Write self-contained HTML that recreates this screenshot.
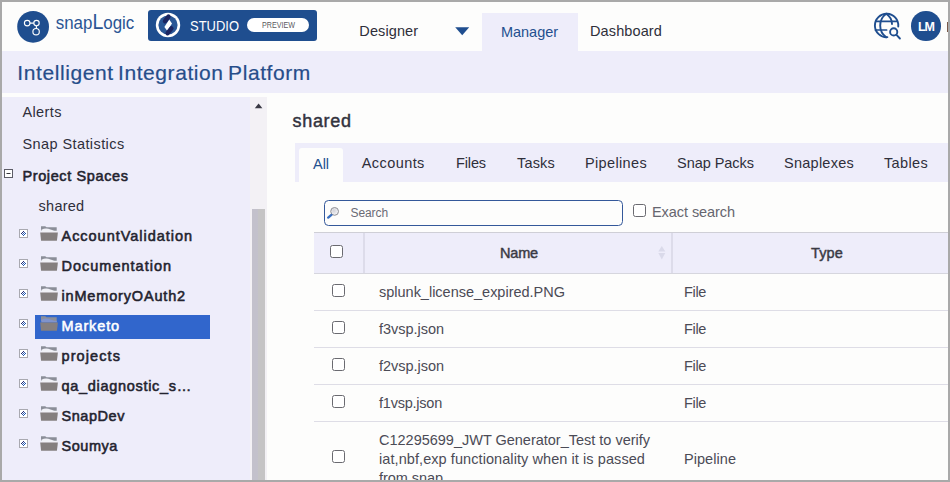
<!DOCTYPE html>
<html><head><meta charset="utf-8"><title>SnapLogic Manager</title>
<style>
html,body{margin:0;padding:0}
body{width:950px;height:482px;overflow:hidden;background:#a9a9a9;font-family:"Liberation Sans", sans-serif;position:relative}
#page{position:absolute;left:2px;top:2px;width:946px;height:478px;background:#fdfdfc}
#wrap{position:absolute;left:0;top:0;width:950px;height:482px;overflow:hidden}
.b{position:absolute}
.t{position:absolute;white-space:nowrap;line-height:20px}
svg{position:absolute;left:0;top:0}
#frame{position:absolute;left:0;top:0;width:946px;height:478px;border:2px solid #a9a9a9;pointer-events:none}
</style></head><body>
<div id="page"></div>
<div id="wrap">
<div class="b" style="left:2px;top:51px;width:946px;height:42px;background:#eeedfa;"></div>
<div class="b" style="left:482px;top:13px;width:96px;height:38px;background:#eeedfa;"></div>
<div class="b" style="left:148px;top:10px;width:169px;height:31px;background:#1f4e8f;border-radius:3px"></div>
<div class="b" style="left:247px;top:18px;width:62px;height:14px;background:#ffffff;border-radius:7px"></div>
<div class="b" style="left:911px;top:11.3px;width:29.5px;height:29.5px;background:#1f4e8f;border-radius:50%"></div>
<div class="b" style="left:946.5px;top:22px;width:1.5px;height:9.5px;background:#7a5a4a;"></div>
<div class="b" style="left:2px;top:97px;width:248px;height:383px;background:#eeedfa;"></div>
<div class="b" style="left:250px;top:97px;width:17px;height:383px;background:#f3f1f5;"></div>
<div class="b" style="left:252px;top:209px;width:13px;height:271px;background:linear-gradient(90deg,#c3c1cb 0,#c3c1cb 42%,#c5c4c5 46%,#c5c4c5 100%);"></div>
<div class="b" style="left:35px;top:315px;width:175px;height:24px;background:#3166cc;"></div>
<div class="b" style="left:295px;top:143px;width:653px;height:39px;background:#eeedfa;"></div>
<div class="b" style="left:299px;top:148px;width:44px;height:34px;background:#fdfdfc;border-radius:3px 3px 0 0"></div>
<div class="b" style="left:324px;top:200px;width:299px;height:26px;background:#fdfdfc;box-sizing:border-box;border:1px solid #34589a;border-radius:4.5px"></div>
<div class="b" style="left:314px;top:232px;width:634px;height:42px;background:#eeedfa;box-sizing:border-box;border-top:1px solid #cfcfd6;border-bottom:1px solid #d6d6de"></div>
<div class="b" style="left:363px;top:233px;width:2px;height:40px;background:#dddcea;"></div>
<div class="b" style="left:671px;top:233px;width:2px;height:40px;background:#dddcea;"></div>
<div class="b" style="left:314px;top:310px;width:634px;height:1px;background:#dedde6;"></div>
<div class="b" style="left:314px;top:347px;width:634px;height:1px;background:#dedde6;"></div>
<div class="b" style="left:314px;top:384px;width:634px;height:1px;background:#dedde6;"></div>
<div class="b" style="left:314px;top:421px;width:634px;height:1px;background:#dedde6;"></div>
<div class="b" style="left:330px;top:245px;width:13px;height:13px;background:#ffffff;box-sizing:border-box;border:1px solid #6a6a70;border-radius:2.5px"></div>
<div class="b" style="left:332px;top:284px;width:13px;height:13px;background:#ffffff;box-sizing:border-box;border:1px solid #6a6a70;border-radius:2.5px"></div>
<div class="b" style="left:332px;top:321px;width:13px;height:13px;background:#ffffff;box-sizing:border-box;border:1px solid #6a6a70;border-radius:2.5px"></div>
<div class="b" style="left:332px;top:358px;width:13px;height:13px;background:#ffffff;box-sizing:border-box;border:1px solid #6a6a70;border-radius:2.5px"></div>
<div class="b" style="left:332px;top:395px;width:13px;height:13px;background:#ffffff;box-sizing:border-box;border:1px solid #6a6a70;border-radius:2.5px"></div>
<div class="b" style="left:332px;top:450px;width:13px;height:13px;background:#ffffff;box-sizing:border-box;border:1px solid #6a6a70;border-radius:2.5px"></div>
<div class="b" style="left:633px;top:204px;width:13px;height:13px;background:#ffffff;box-sizing:border-box;border:1px solid #6a6a70;border-radius:2.5px"></div>
<svg width="950" height="482" viewBox="0 0 950 482">
<!-- snaplogic logo -->
<circle cx="33.1" cy="26.85" r="15.9" fill="#1f4e8f"/>
<g fill="none" stroke="#ffffff" stroke-width="1.15">
<circle cx="27.2" cy="23.1" r="2.8"/>
<circle cx="36.5" cy="23.1" r="2.7"/>
<circle cx="36.1" cy="31.7" r="3.2"/>
<path d="M30 23.1H33.8M36.4 25.8V28.5"/>
</g>
<text id="logotext" x="55.7" y="29.2" font-family="Liberation Sans, sans-serif" font-size="18.7" fill="#2a5594" textLength="78.6" lengthAdjust="spacingAndGlyphs">snap<tspan font-size="21.6">L</tspan>ogic</text>
<!-- studio icon -->
<circle cx="168" cy="25" r="12.2" fill="#ffffff"/>
<circle cx="168" cy="25" r="9.6" fill="#2a5796"/>
<path d="M169.2 19.4L172 23.4L167.4 31L164.4 27Z" fill="#ffffff"/>
<path d="M165 21.2L168.5 16.6" stroke="#1c2560" stroke-width="4.4" stroke-linecap="round"/>
<path d="M167.6 33.2L171.4 28.4" stroke="#1c2560" stroke-width="4.4" stroke-linecap="round"/>
<!-- nav dropdown triangle -->
<path d="M455.2 27.2H469.2L462.2 35.2Z" fill="#1f4e8f"/>
<!-- globe -->
<g fill="none" stroke="#1f4e8f" stroke-width="1.9" stroke-linecap="round">
<path d="M898.26 26.5A11.7 11.7 0 1 0 887.4 37.17"/>
<path d="M886.2 13.8C878.2 19.5 878.2 31.5 886.2 37.2"/>
<path d="M886.2 13.8C890 16.4 891.9 19.6 892 24"/>
<path d="M876 21.4H897.2M875.4 30H886.6" stroke-width="1.7"/>
<circle cx="893.7" cy="31.9" r="3.6"/>
<path d="M896.5 34.9L899.9 38.5"/>
</g>
<!-- scrollbar arrow -->
<path d="M254.8 108.2H262.4L258.6 103.6Z" fill="#3a3a44"/>
<!-- minus box -->
<rect x="4.5" y="169.5" width="8" height="8" fill="#ffffff" stroke="#5c5c66" stroke-width="1"/>
<path d="M6.5 173.5H10.5" stroke="#33333a" stroke-width="1"/>
<!-- search magnifier -->
<defs><radialGradient id="lens" cx="0.4" cy="0.4" r="0.7"><stop offset="0" stop-color="#d2d2d8"/><stop offset="1" stop-color="#fbfbfd"/></radialGradient></defs><circle cx="334.6" cy="211.4" r="3.9" fill="url(#lens)" stroke="#8d8d93" stroke-width="1"/>
<path d="M331.4 214.9L328.2 217.6" stroke="#3a6fc0" stroke-width="2.4" stroke-linecap="round"/>
<!-- sort icon -->
<path d="M658.3 251.6H665.3L661.8 245.9Z" fill="#dadaea"/>
<path d="M658.3 252.9H665.3L661.8 259.4Z" fill="#dadaea"/>
<rect x="19.5" y="229.5" width="8" height="8" fill="#ffffff" stroke="#a9a9b0" stroke-width="1"/>
<rect x="23" y="231" width="1" height="1" fill="#1c2470"/><rect x="22" y="232" width="1" height="1" fill="#1c2470"/><rect x="24" y="232" width="1" height="1" fill="#2458b0"/><rect x="21" y="233" width="1" height="1" fill="#1c2470"/><rect x="23" y="233" width="1" height="1" fill="#2458b0"/><rect x="25" y="233" width="1" height="1" fill="#2458b0"/><rect x="22" y="234" width="1" height="1" fill="#2458b0"/><rect x="24" y="234" width="1" height="1" fill="#2458b0"/><rect x="23" y="235" width="1" height="1" fill="#2458b0"/>
<path d="M41 226.2H45.2L46.6 227.3H56.7V231H41Z" fill="#8b8e98"/>
<path d="M41.4 229.7C44.5 228.3 47.5 228.3 50.5 229.5S55 230.9 56.9 230.7V232.6H41.2Z" fill="#f1f1f7"/>
<path d="M40.2 232.5H57.9L56.9 240.7H41.1Z" fill="#857f7f"/>
<rect x="19.5" y="259.5" width="8" height="8" fill="#ffffff" stroke="#a9a9b0" stroke-width="1"/>
<rect x="23" y="261" width="1" height="1" fill="#1c2470"/><rect x="22" y="262" width="1" height="1" fill="#1c2470"/><rect x="24" y="262" width="1" height="1" fill="#2458b0"/><rect x="21" y="263" width="1" height="1" fill="#1c2470"/><rect x="23" y="263" width="1" height="1" fill="#2458b0"/><rect x="25" y="263" width="1" height="1" fill="#2458b0"/><rect x="22" y="264" width="1" height="1" fill="#2458b0"/><rect x="24" y="264" width="1" height="1" fill="#2458b0"/><rect x="23" y="265" width="1" height="1" fill="#2458b0"/>
<path d="M41 256.2H45.2L46.6 257.3H56.7V261H41Z" fill="#8b8e98"/>
<path d="M41.4 259.7C44.5 258.3 47.5 258.3 50.5 259.5S55 260.9 56.9 260.7V262.6H41.2Z" fill="#f1f1f7"/>
<path d="M40.2 262.5H57.9L56.9 270.7H41.1Z" fill="#857f7f"/>
<rect x="19.5" y="289.5" width="8" height="8" fill="#ffffff" stroke="#a9a9b0" stroke-width="1"/>
<rect x="23" y="291" width="1" height="1" fill="#1c2470"/><rect x="22" y="292" width="1" height="1" fill="#1c2470"/><rect x="24" y="292" width="1" height="1" fill="#2458b0"/><rect x="21" y="293" width="1" height="1" fill="#1c2470"/><rect x="23" y="293" width="1" height="1" fill="#2458b0"/><rect x="25" y="293" width="1" height="1" fill="#2458b0"/><rect x="22" y="294" width="1" height="1" fill="#2458b0"/><rect x="24" y="294" width="1" height="1" fill="#2458b0"/><rect x="23" y="295" width="1" height="1" fill="#2458b0"/>
<path d="M41 286.2H45.2L46.6 287.3H56.7V291H41Z" fill="#8b8e98"/>
<path d="M41.4 289.7C44.5 288.3 47.5 288.3 50.5 289.5S55 290.9 56.9 290.7V292.6H41.2Z" fill="#f1f1f7"/>
<path d="M40.2 292.5H57.9L56.9 300.7H41.1Z" fill="#857f7f"/>
<rect x="19.5" y="319.5" width="8" height="8" fill="#ffffff" stroke="#a9a9b0" stroke-width="1"/>
<rect x="23" y="321" width="1" height="1" fill="#1c2470"/><rect x="22" y="322" width="1" height="1" fill="#1c2470"/><rect x="24" y="322" width="1" height="1" fill="#2458b0"/><rect x="21" y="323" width="1" height="1" fill="#1c2470"/><rect x="23" y="323" width="1" height="1" fill="#2458b0"/><rect x="25" y="323" width="1" height="1" fill="#2458b0"/><rect x="22" y="324" width="1" height="1" fill="#2458b0"/><rect x="24" y="324" width="1" height="1" fill="#2458b0"/><rect x="23" y="325" width="1" height="1" fill="#2458b0"/>
<path d="M41 316.2H45.2L46.6 317.3H56.7V321H41Z" fill="#8b8e98"/>
<path d="M41.4 319.7C44.5 318.3 47.5 318.3 50.5 319.5S55 320.9 56.9 320.7V322.6H41.2Z" fill="#7f93cc"/>
<path d="M40.2 322.5H57.9L56.9 330.7H41.1Z" fill="#857f7f"/>
<rect x="19.5" y="349.5" width="8" height="8" fill="#ffffff" stroke="#a9a9b0" stroke-width="1"/>
<rect x="23" y="351" width="1" height="1" fill="#1c2470"/><rect x="22" y="352" width="1" height="1" fill="#1c2470"/><rect x="24" y="352" width="1" height="1" fill="#2458b0"/><rect x="21" y="353" width="1" height="1" fill="#1c2470"/><rect x="23" y="353" width="1" height="1" fill="#2458b0"/><rect x="25" y="353" width="1" height="1" fill="#2458b0"/><rect x="22" y="354" width="1" height="1" fill="#2458b0"/><rect x="24" y="354" width="1" height="1" fill="#2458b0"/><rect x="23" y="355" width="1" height="1" fill="#2458b0"/>
<path d="M41 346.2H45.2L46.6 347.3H56.7V351H41Z" fill="#8b8e98"/>
<path d="M41.4 349.7C44.5 348.3 47.5 348.3 50.5 349.5S55 350.9 56.9 350.7V352.6H41.2Z" fill="#f1f1f7"/>
<path d="M40.2 352.5H57.9L56.9 360.7H41.1Z" fill="#857f7f"/>
<rect x="19.5" y="379.5" width="8" height="8" fill="#ffffff" stroke="#a9a9b0" stroke-width="1"/>
<rect x="23" y="381" width="1" height="1" fill="#1c2470"/><rect x="22" y="382" width="1" height="1" fill="#1c2470"/><rect x="24" y="382" width="1" height="1" fill="#2458b0"/><rect x="21" y="383" width="1" height="1" fill="#1c2470"/><rect x="23" y="383" width="1" height="1" fill="#2458b0"/><rect x="25" y="383" width="1" height="1" fill="#2458b0"/><rect x="22" y="384" width="1" height="1" fill="#2458b0"/><rect x="24" y="384" width="1" height="1" fill="#2458b0"/><rect x="23" y="385" width="1" height="1" fill="#2458b0"/>
<path d="M41 376.2H45.2L46.6 377.3H56.7V381H41Z" fill="#8b8e98"/>
<path d="M41.4 379.7C44.5 378.3 47.5 378.3 50.5 379.5S55 380.9 56.9 380.7V382.6H41.2Z" fill="#f1f1f7"/>
<path d="M40.2 382.5H57.9L56.9 390.7H41.1Z" fill="#857f7f"/>
<rect x="19.5" y="409.5" width="8" height="8" fill="#ffffff" stroke="#a9a9b0" stroke-width="1"/>
<rect x="23" y="411" width="1" height="1" fill="#1c2470"/><rect x="22" y="412" width="1" height="1" fill="#1c2470"/><rect x="24" y="412" width="1" height="1" fill="#2458b0"/><rect x="21" y="413" width="1" height="1" fill="#1c2470"/><rect x="23" y="413" width="1" height="1" fill="#2458b0"/><rect x="25" y="413" width="1" height="1" fill="#2458b0"/><rect x="22" y="414" width="1" height="1" fill="#2458b0"/><rect x="24" y="414" width="1" height="1" fill="#2458b0"/><rect x="23" y="415" width="1" height="1" fill="#2458b0"/>
<path d="M41 406.2H45.2L46.6 407.3H56.7V411H41Z" fill="#8b8e98"/>
<path d="M41.4 409.7C44.5 408.3 47.5 408.3 50.5 409.5S55 410.9 56.9 410.7V412.6H41.2Z" fill="#f1f1f7"/>
<path d="M40.2 412.5H57.9L56.9 420.7H41.1Z" fill="#857f7f"/>
<rect x="19.5" y="439.5" width="8" height="8" fill="#ffffff" stroke="#a9a9b0" stroke-width="1"/>
<rect x="23" y="441" width="1" height="1" fill="#1c2470"/><rect x="22" y="442" width="1" height="1" fill="#1c2470"/><rect x="24" y="442" width="1" height="1" fill="#2458b0"/><rect x="21" y="443" width="1" height="1" fill="#1c2470"/><rect x="23" y="443" width="1" height="1" fill="#2458b0"/><rect x="25" y="443" width="1" height="1" fill="#2458b0"/><rect x="22" y="444" width="1" height="1" fill="#2458b0"/><rect x="24" y="444" width="1" height="1" fill="#2458b0"/><rect x="23" y="445" width="1" height="1" fill="#2458b0"/>
<path d="M41 436.2H45.2L46.6 437.3H56.7V441H41Z" fill="#8b8e98"/>
<path d="M41.4 439.7C44.5 438.3 47.5 438.3 50.5 439.5S55 440.9 56.9 440.7V442.6H41.2Z" fill="#f1f1f7"/>
<path d="M40.2 442.5H57.9L56.9 450.7H41.1Z" fill="#857f7f"/>
</svg>

<span class="t" id="designer" style="left:359.3px;top:20.98px;font-size:14.5px;font-weight:400;color:#2f2f3a;letter-spacing:0.109px;">Designer</span>
<span class="t" id="manager" style="left:501.0px;top:21.98px;font-size:14.5px;font-weight:400;color:#24508f;letter-spacing:-0.033px;">Manager</span>
<span class="t" id="dashboard" style="left:590.0px;top:20.98px;font-size:14.5px;font-weight:400;color:#2f2f3a;letter-spacing:0.118px;">Dashboard</span>
<span class="t" id="studio" style="left:190.0px;top:16.40px;font-size:15px;font-weight:400;color:#ffffff;transform-origin:0 50%;transform:scaleX(0.8646);">STUDIO</span>
<span class="t" id="preview" style="left:262.0px;top:15.18px;font-size:9px;font-weight:400;color:#5a5a60;transform-origin:0 50%;transform:scaleX(0.7949);">PREVIEW</span>
<span class="t" id="lm" style="left:918.0px;top:16.67px;font-size:12.5px;font-weight:700;color:#ffffff;letter-spacing:-1.031px;">LM</span>
<span class="t" id="title" style="left:17.3px;top:62.72px;font-size:21px;font-weight:400;color:#264d8a;letter-spacing:0.581px;word-spacing:-2px;-webkit-text-stroke:0.2px #264d8a">Intelligent Integration Platform</span>
<span class="t" id="alerts" style="left:22.4px;top:101.98px;font-size:14.5px;font-weight:400;color:#2f2f3a;letter-spacing:0.420px;">Alerts</span>
<span class="t" id="snapstat" style="left:22.4px;top:133.98px;font-size:14.5px;font-weight:400;color:#2f2f3a;letter-spacing:0.419px;">Snap Statistics</span>
<span class="t" id="projsp" style="left:22.4px;top:166.28px;font-size:14.5px;font-weight:400;color:#23232e;letter-spacing:0.626px;-webkit-text-stroke:0.55px #23232e">Project Spaces</span>
<span class="t" id="lshared" style="left:38.6px;top:195.98px;font-size:14.5px;font-weight:400;color:#2f2f3a;letter-spacing:0.243px;">shared</span>
<span class="t" id="f1" style="left:61.5px;top:225.98px;font-size:14.5px;font-weight:400;color:#23232e;letter-spacing:0.970px;-webkit-text-stroke:0.55px #23232e">AccountValidation</span>
<span class="t" id="f2" style="left:61.5px;top:255.98px;font-size:14.5px;font-weight:400;color:#23232e;letter-spacing:0.998px;-webkit-text-stroke:0.55px #23232e">Documentation</span>
<span class="t" id="f3" style="left:61.5px;top:285.98px;font-size:14.5px;font-weight:400;color:#23232e;letter-spacing:0.834px;-webkit-text-stroke:0.55px #23232e">inMemoryOAuth2</span>
<span class="t" id="f4" style="left:61.5px;top:315.98px;font-size:14.5px;font-weight:400;color:#ffffff;letter-spacing:0.873px;-webkit-text-stroke:0.55px #ffffff">Marketo</span>
<span class="t" id="f5" style="left:61.5px;top:345.98px;font-size:14.5px;font-weight:400;color:#23232e;letter-spacing:1.090px;-webkit-text-stroke:0.55px #23232e">projects</span>
<span class="t" id="f6" style="left:61.5px;top:375.98px;font-size:14.5px;font-weight:400;color:#23232e;letter-spacing:0.699px;-webkit-text-stroke:0.55px #23232e">qa_diagnostic_s…</span>
<span class="t" id="f7" style="left:61.5px;top:405.98px;font-size:14.5px;font-weight:400;color:#23232e;letter-spacing:0.549px;-webkit-text-stroke:0.55px #23232e">SnapDev</span>
<span class="t" id="f8" style="left:61.5px;top:435.98px;font-size:14.5px;font-weight:400;color:#23232e;letter-spacing:0.549px;-webkit-text-stroke:0.55px #23232e">Soumya</span>
<span class="t" id="hshared" style="left:292.6px;top:110.56px;font-size:18px;font-weight:400;color:#33333e;letter-spacing:0.659px;-webkit-text-stroke:0.45px #33333e">shared</span>
<span class="t" id="t1" style="left:313.0px;top:154.38px;font-size:14.5px;font-weight:400;color:#24508f;letter-spacing:-0.042px;">All</span>
<span class="t" id="t2" style="left:361.7px;top:152.98px;font-size:14.5px;font-weight:400;color:#2f2f3a;letter-spacing:0.430px;">Accounts</span>
<span class="t" id="t3" style="left:456.0px;top:152.98px;font-size:14.5px;font-weight:400;color:#2f2f3a;letter-spacing:-0.125px;">Files</span>
<span class="t" id="t4" style="left:517.0px;top:152.98px;font-size:14.5px;font-weight:400;color:#2f2f3a;letter-spacing:0.184px;">Tasks</span>
<span class="t" id="t5" style="left:585.0px;top:152.98px;font-size:14.5px;font-weight:400;color:#2f2f3a;letter-spacing:0.351px;">Pipelines</span>
<span class="t" id="t6" style="left:677.0px;top:152.98px;font-size:14.5px;font-weight:400;color:#2f2f3a;letter-spacing:-0.039px;">Snap Packs</span>
<span class="t" id="t7" style="left:784.0px;top:152.98px;font-size:14.5px;font-weight:400;color:#2f2f3a;letter-spacing:0.253px;">Snaplexes</span>
<span class="t" id="t8" style="left:884.0px;top:152.98px;font-size:14.5px;font-weight:400;color:#2f2f3a;letter-spacing:0.346px;">Tables</span>
<span class="t" id="search" style="left:350.5px;top:202.84px;font-size:12px;font-weight:400;color:#6b6b75;letter-spacing:-0.089px;">Search</span>
<span class="t" id="exact" style="left:652.0px;top:201.98px;font-size:14.5px;font-weight:400;color:#66666f;letter-spacing:-0.069px;">Exact search</span>
<span class="t" id="hname" style="left:500.0px;top:242.98px;font-size:14.5px;font-weight:400;color:#3a3a44;letter-spacing:-0.172px;-webkit-text-stroke:0.45px #3a3a44">Name</span>
<span class="t" id="htype" style="left:811.0px;top:242.98px;font-size:14.5px;font-weight:400;color:#3a3a44;letter-spacing:0.141px;-webkit-text-stroke:0.45px #3a3a44">Type</span>
<span class="t" id="r1" style="left:379.0px;top:281.58px;font-size:14.5px;font-weight:400;color:#4b4b56;letter-spacing:-0.007px;">splunk_license_expired.PNG</span>
<span class="t" id="r2" style="left:379.0px;top:318.58px;font-size:14.5px;font-weight:400;color:#4b4b56;letter-spacing:-0.030px;">f3vsp.json</span>
<span class="t" id="r3" style="left:379.0px;top:355.58px;font-size:14.5px;font-weight:400;color:#4b4b56;letter-spacing:-0.030px;">f2vsp.json</span>
<span class="t" id="r4" style="left:379.0px;top:392.58px;font-size:14.5px;font-weight:400;color:#4b4b56;letter-spacing:-0.230px;">f1vsp.json</span>
<span class="t" id="r5a" style="left:379.0px;top:429.68px;font-size:14.5px;font-weight:400;color:#4b4b56;letter-spacing:-0.009px;">C12295699_JWT Generator_Test to verify</span>
<span class="t" id="r5b" style="left:379.0px;top:448.68px;font-size:14.5px;font-weight:400;color:#4b4b56;letter-spacing:0.075px;">iat,nbf,exp functionality when it is passed</span>
<span class="t" id="r5c" style="left:379.0px;top:467.68px;font-size:14.5px;font-weight:400;color:#4b4b56;letter-spacing:-0.054px;">from snap</span>
<span class="t" id="y1" style="left:684.0px;top:281.58px;font-size:14.5px;font-weight:400;color:#4b4b56;letter-spacing:-0.344px;">File</span>
<span class="t" id="y2" style="left:684.0px;top:318.58px;font-size:14.5px;font-weight:400;color:#4b4b56;letter-spacing:-0.344px;">File</span>
<span class="t" id="y3" style="left:684.0px;top:355.58px;font-size:14.5px;font-weight:400;color:#4b4b56;letter-spacing:-0.344px;">File</span>
<span class="t" id="y4" style="left:684.0px;top:392.58px;font-size:14.5px;font-weight:400;color:#4b4b56;letter-spacing:-0.344px;">File</span>
<span class="t" id="y5" style="left:684.0px;top:448.68px;font-size:14.5px;font-weight:400;color:#4b4b56;letter-spacing:0.051px;">Pipeline</span>
</div>
<div id="frame"></div>
</body></html>
